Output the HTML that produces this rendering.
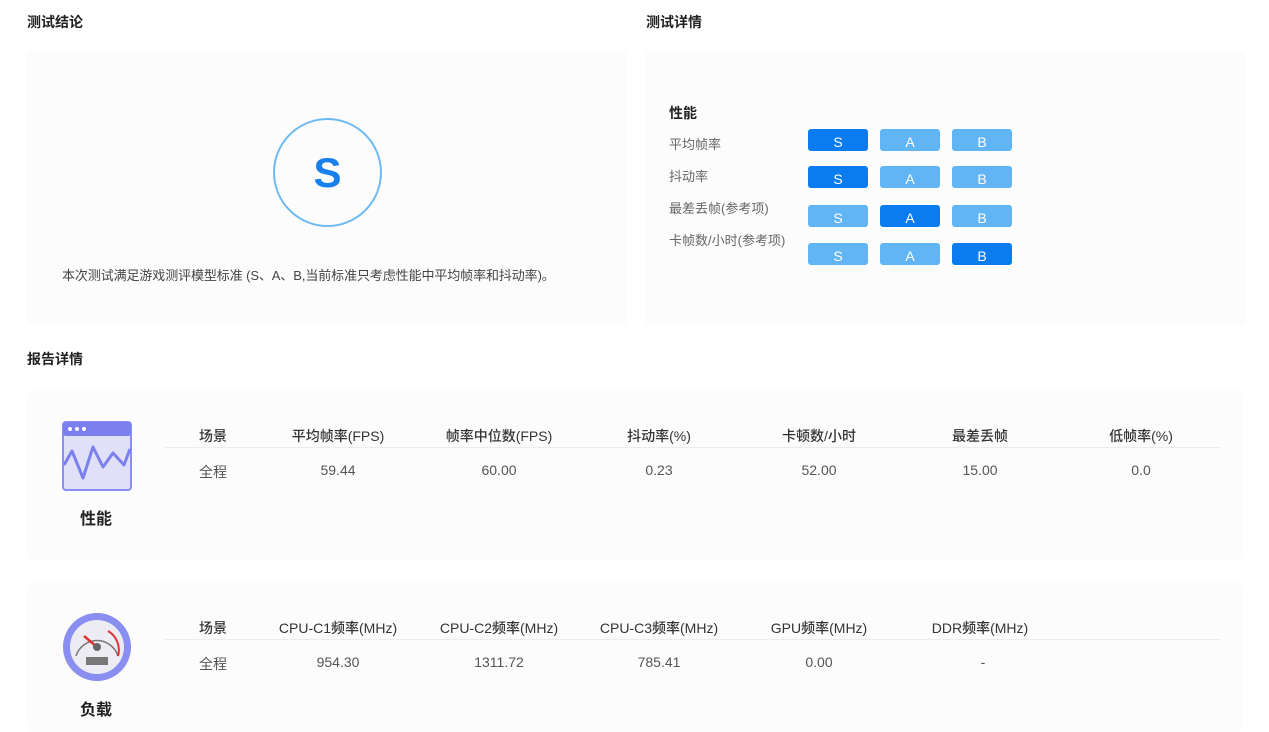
<!DOCTYPE html>
<html><head><meta charset="utf-8"><style>
*{margin:0;padding:0;box-sizing:border-box}
body{width:1269px;height:732px;background:#fff;position:relative;overflow:hidden;font-family:"Liberation Sans","Noto Sans CJK SC",sans-serif;color:#333}
.a{position:absolute;white-space:nowrap}
.t{font-size:14px;font-weight:bold;color:#222}
.p{position:absolute;background:#fcfcfc;border-radius:6px}
.lbl{font-size:13px;color:#666}
.b{position:absolute;width:60px;height:22px;border-radius:3px;color:#fff;font-size:14px;text-align:center;line-height:26px;background:#62b5f5}
.d{background:#0a7cf0}
.h{font-size:14px;color:#333;transform:translateX(-50%);font-weight:500}
.v{font-size:14px;color:#555;transform:translateX(-50%)}
.ln{position:absolute;height:1px;background:#ececec}
</style></head><body>
<div class="a t" style="left:27px;top:12px">测试结论</div>
<div class="a t" style="left:646px;top:12px">测试详情</div>
<div class="p" style="left:27px;top:50px;width:600px;height:276px"></div>
<div class="p" style="left:645px;top:50px;width:600px;height:276px"></div>
<div class="a" style="left:273px;top:118px;width:109px;height:109px;border:2px solid #6cbaf2;border-radius:50%;text-align:center;line-height:106px;font-size:42px;font-weight:bold;color:#1780ea">S</div>
<div class="a" style="left:62px;top:265px;font-size:13px;color:#444;letter-spacing:-0.1px">本次测试满足游戏测评模型标准 (S、A、B,当前标准只考虑性能中平均帧率和抖动率)。</div>
<div class="a" style="left:669px;top:103px;font-size:14px;font-weight:bold;color:#222">性能</div>
<div class="a lbl" style="left:669px;top:134px">平均帧率</div>
<div class="a lbl" style="left:669px;top:166px">抖动率</div>
<div class="a lbl" style="left:669px;top:198px">最差丢帧(参考项)</div>
<div class="a lbl" style="left:669px;top:230px">卡帧数/小时(参考项)</div>
<div class="b d" style="left:808px;top:129px">S</div><div class="b" style="left:880px;top:129px">A</div><div class="b" style="left:952px;top:129px">B</div>
<div class="b d" style="left:808px;top:166px">S</div><div class="b" style="left:880px;top:166px">A</div><div class="b" style="left:952px;top:166px">B</div>
<div class="b" style="left:808px;top:205px">S</div><div class="b d" style="left:880px;top:205px">A</div><div class="b" style="left:952px;top:205px">B</div>
<div class="b" style="left:808px;top:243px">S</div><div class="b" style="left:880px;top:243px">A</div><div class="b d" style="left:952px;top:243px">B</div>

<div class="a t" style="left:27px;top:349px">报告详情</div>
<div class="p" style="left:27px;top:390px;width:1216px;height:170px"></div>
<div class="p" style="left:27px;top:582px;width:1216px;height:150px"></div>

<svg class="a" style="left:62px;top:421px" width="70" height="70" viewBox="0 0 70 70">
<rect x="1" y="1" width="68" height="68" rx="3" fill="#e0e0f8" stroke="#8a8ef0" stroke-width="2"/>
<rect x="1" y="1" width="68" height="14" rx="3" fill="#7b80ee"/>
<circle cx="8" cy="8" r="2" fill="#fff"/><circle cx="15" cy="8" r="2" fill="#fff"/><circle cx="22" cy="8" r="2" fill="#fff"/>
<polyline points="2,44 10,30 21,57 31,26 41,46 51,32 62,44 68,28" fill="none" stroke="#7b80ee" stroke-width="3" stroke-linejoin="round"/>
</svg>
<div class="a" style="left:80px;top:505px;font-size:16px;font-weight:bold;color:#222">性能</div>
<div class="ln" style="left:165px;top:447px;width:1056px"></div>
<div class="a h" style="left:213px;top:426px">场景</div>
<div class="a h" style="left:338px;top:426px">平均帧率(FPS)</div>
<div class="a h" style="left:499px;top:426px">帧率中位数(FPS)</div>
<div class="a h" style="left:659px;top:426px">抖动率(%)</div>
<div class="a h" style="left:819px;top:426px">卡顿数/小时</div>
<div class="a h" style="left:980px;top:426px">最差丢帧</div>
<div class="a h" style="left:1141px;top:426px">低帧率(%)</div>
<div class="a v" style="left:213px;top:462px">全程</div>
<div class="a v" style="left:338px;top:462px">59.44</div>
<div class="a v" style="left:499px;top:462px">60.00</div>
<div class="a v" style="left:659px;top:462px">0.23</div>
<div class="a v" style="left:819px;top:462px">52.00</div>
<div class="a v" style="left:980px;top:462px">15.00</div>
<div class="a v" style="left:1141px;top:462px">0.0</div>

<svg class="a" style="left:62px;top:612px" width="70" height="70" viewBox="0 0 70 70">
<circle cx="35" cy="35" r="34" fill="#8a8ef0"/>
<circle cx="35" cy="35" r="27" fill="#ececf2"/>
<path d="M14 44 A22 22 0 0 1 56 44" fill="none" stroke="#777" stroke-width="1.5"/>
<path d="M46 19 A22 22 0 0 1 56 44" fill="none" stroke="#d33" stroke-width="2"/>
<line x1="35" y1="35" x2="22" y2="24" stroke="#d33" stroke-width="2.5"/>
<circle cx="35" cy="35" r="4" fill="#666"/>
<rect x="24" y="45" width="22" height="8" fill="#777"/>
</svg>
<div class="a" style="left:80px;top:696px;font-size:16px;font-weight:bold;color:#222">负载</div>
<div class="ln" style="left:165px;top:639px;width:1056px"></div>
<div class="a h" style="left:213px;top:618px">场景</div>
<div class="a h" style="left:338px;top:618px">CPU-C1频率(MHz)</div>
<div class="a h" style="left:499px;top:618px">CPU-C2频率(MHz)</div>
<div class="a h" style="left:659px;top:618px">CPU-C3频率(MHz)</div>
<div class="a h" style="left:819px;top:618px">GPU频率(MHz)</div>
<div class="a h" style="left:980px;top:618px">DDR频率(MHz)</div>
<div class="a v" style="left:213px;top:654px">全程</div>
<div class="a v" style="left:338px;top:654px">954.30</div>
<div class="a v" style="left:499px;top:654px">1311.72</div>
<div class="a v" style="left:659px;top:654px">785.41</div>
<div class="a v" style="left:819px;top:654px">0.00</div>
<div class="a v" style="left:983px;top:654px">-</div>
</body></html>
